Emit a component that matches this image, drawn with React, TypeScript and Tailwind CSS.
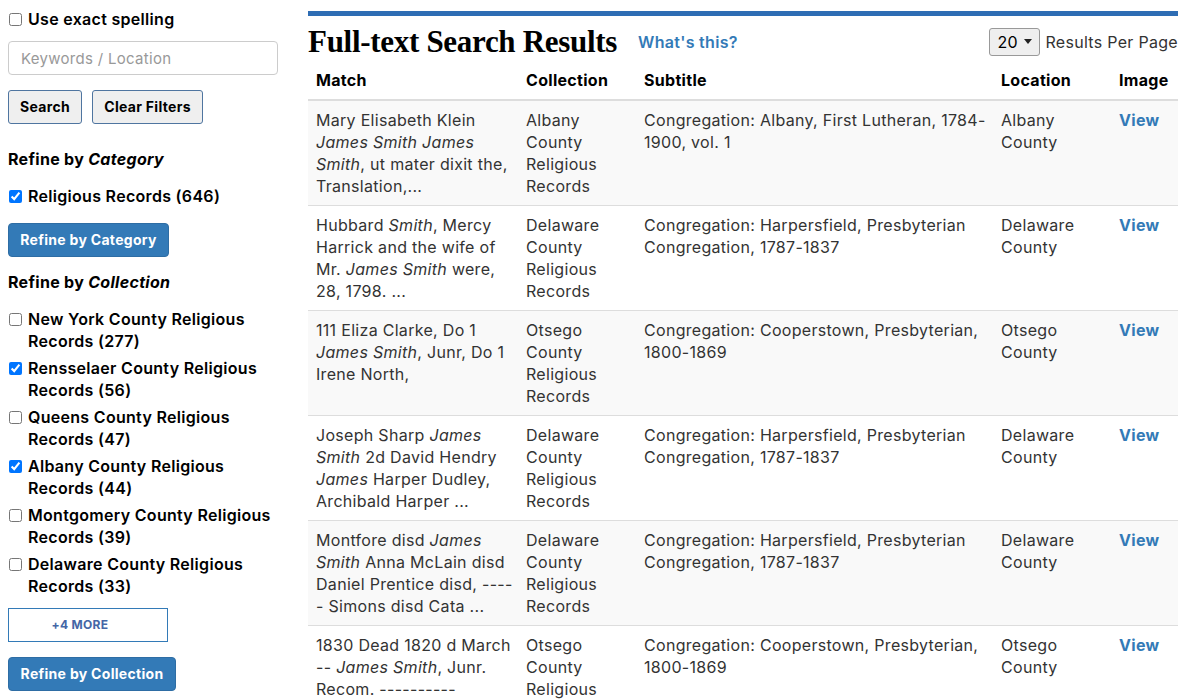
const collections = [
  { label: "New York County Religious Records (277)", checked: false },
  { label: "Rensselaer County Religious Records (56)", checked: true },
  { label: "Queens County Religious Records (47)", checked: false },
  { label: "Albany County Religious Records (44)", checked: true },
  { label: "Montgomery County Religious Records (39)", checked: false },
  { label: "Delaware County Religious Records (33)", checked: false },
];

const harpers = "Congregation: Harpersfield, Presbyterian Congregation, 1787-1837";
const cooper = "Congregation: Cooperstown, Presbyterian, 1800-1869";

const rows = [
  {
    match: (
      <>
        Mary Elisabeth Klein <i>James Smith James Smith</i>, ut mater dixit the, Translation,...
      </>
    ),
    collection: "Albany County Religious Records",
    subtitle: "Congregation: Albany, First Lutheran, 1784-1900, vol. 1",
    location: "Albany County",
  },
  {
    match: (
      <>
        Hubbard <i>Smith</i>, Mercy Harrick and the wife of Mr. <i>James Smith</i> were, 28, 1798. ...
      </>
    ),
    collection: "Delaware County Religious Records",
    subtitle: harpers,
    location: "Delaware County",
  },
  {
    match: (
      <>
        111 Eliza Clarke, Do 1 <i>James Smith</i>, Junr, Do 1 Irene North,
      </>
    ),
    collection: "Otsego County Religious Records",
    subtitle: cooper,
    location: "Otsego County",
  },
  {
    match: (
      <>
        Joseph Sharp <i>James Smith</i> 2d David Hendry <i>James</i> Harper Dudley, Archibald Harper ...
      </>
    ),
    collection: "Delaware County Religious Records",
    subtitle: harpers,
    location: "Delaware County",
  },
  {
    match: (
      <>
        Montfore disd <i>James Smith</i> Anna McLain disd Daniel Prentice disd, ----<wbr />- Simons disd Cata ...
      </>
    ),
    collection: "Delaware County Religious Records",
    subtitle: harpers,
    location: "Delaware County",
  },
  {
    match: (
      <>
        1830 Dead 1820 d March -- <i>James Smith</i>, Junr. Recom. ----------
      </>
    ),
    collection: "Otsego County Religious Records",
    subtitle: cooper,
    location: "Otsego County",
  },
];

function Check({ checked, children }: { checked?: boolean; children: React.ReactNode }) {
  return (
    <label className="flex items-start gap-[6px]">
      <input type="checkbox" defaultChecked={checked} className="mt-[5px] ml-[1px] h-[13px] w-[13px] shrink-0" />
      <span>{children}</span>
    </label>
  );
}

export default function App() {
  return (
    <div className="flex min-h-screen bg-white pl-2 text-[16px] leading-[22px] tracking-[0.3px] text-[#333] font-['Inter',sans-serif]">
      {/* Sidebar */}
      <aside className="w-[270px] shrink-0 pt-2 text-black">
        <Check>
          <span className="font-semibold">Use exact spelling</span>
        </Check>
        <input
          placeholder="Keywords / Location"
          className="mt-[11px] block h-[34px] w-full rounded-[4px] border border-[#ccc] px-3 text-[15px] placeholder:text-[#999]"
        />
        <div className="mt-[15px] flex gap-[10px]">
          <button className="h-[34px] w-[74px] rounded-[3px] border border-[#4f75a0] bg-[#efefef] text-[14px] font-bold">
            Search
          </button>
          <button className="h-[34px] w-[111px] rounded-[3px] border border-[#4f75a0] bg-[#efefef] text-[14px] font-bold">
            Clear Filters
          </button>
        </div>

        <h3 className="mt-6 font-bold">
          Refine by <i>Category</i>
        </h3>
        <div className="mt-[15px] font-semibold">
          <Check checked>Religious Records (646)</Check>
        </div>
        <button className="mt-4 h-[34px] w-[161px] rounded-[4px] border border-[#2e6da4] bg-[#337ab7] text-[14px] font-bold text-white">
          Refine by Category
        </button>

        <h3 className="mt-[14px] font-bold">
          Refine by <i>Collection</i>
        </h3>
        <div className="mt-[15px] flex flex-col gap-[5px] font-semibold">
          {collections.map((c) => (
            <Check key={c.label} checked={c.checked}>
              {c.label}
            </Check>
          ))}
        </div>
        <button className="mt-[11px] block h-[34px] w-[160px] border border-[#337ab7] bg-white pr-4 text-[12px] font-bold text-[#4466a6]">
          +4 MORE
        </button>
        <button className="mt-[15px] block h-[34px] w-[168px] rounded-[4px] border border-[#2e6da4] bg-[#337ab7] text-[14px] font-bold text-white">
          Refine by Collection
        </button>
      </aside>

      {/* Main */}
      <main className="ml-[30px] w-[870px] shrink-0">
        <div className="mt-[11px] h-[5px] bg-[#2e6db4]" />
        <div className="flex h-[45px] items-center pt-[6px]">
          <h1 className="font-['Liberation_Serif',serif] text-[31px] font-bold tracking-[-0.3px] text-black">
            Full-text Search Results
          </h1>
          <a className="ml-[21px] font-semibold text-[#337ab7]">What's this?</a>
          <div className="ml-auto flex items-center">
            <div className="flex h-[28px] w-[51px] items-center gap-[6px] rounded-[3px] border border-[#999] bg-[#efefef] pl-[7px] text-black">
              20
              <svg width="8" height="5" viewBox="0 0 8 5">
                <path d="M0 0h8L4 5z" fill="#222" />
              </svg>
            </div>
            <span className="ml-[5px]">Results Per Page</span>
          </div>
        </div>

        <table className="w-full table-fixed border-collapse">
          <colgroup>
            <col className="w-[210px]" />
            <col className="w-[118px]" />
            <col className="w-[357px]" />
            <col className="w-[118px]" />
            <col className="w-[67px]" />
          </colgroup>
          <thead>
            <tr className="border-b-2 border-[#ddd] text-left text-black">
              <th className="py-2 pl-2 pr-1 font-bold">Match</th>
              <th className="py-2 pl-2 pr-1 font-bold">Collection</th>
              <th className="py-2 pl-2 pr-1 font-bold">Subtitle</th>
              <th className="py-2 pl-2 pr-1 font-bold">Location</th>
              <th className="py-2 pl-2 pr-0 font-bold">Image</th>
            </tr>
          </thead>
          <tbody>
            {rows.map((r, i) => (
              <tr key={i} className={`border-t border-[#ddd] align-top ${i % 2 === 0 ? "bg-[#f9f9f9]" : "bg-white"}`}>
                <td className="py-2 pl-2 pr-1">{r.match}</td>
                <td className="py-2 pl-2 pr-1">{r.collection}</td>
                <td className="py-2 pl-2 pr-1">{r.subtitle}</td>
                <td className="py-2 pl-2 pr-1">{r.location}</td>
                <td className="py-2 pl-2 pr-0">
                  <a className="font-bold text-[#337ab7]">View</a>
                </td>
              </tr>
            ))}
          </tbody>
        </table>
      </main>
    </div>
  );
}
